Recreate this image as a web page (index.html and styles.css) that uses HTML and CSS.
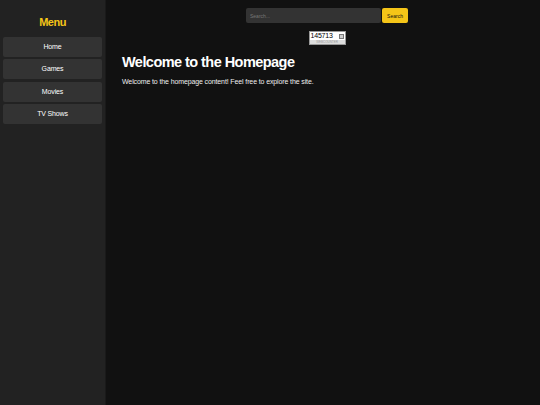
FILE: index.html
```html
<!DOCTYPE html>
<html>
<head>
<meta charset="utf-8">
<link rel="stylesheet" href="styles.css">
</head>
<body>
<div class="layout">
  <aside class="sidebar">
    <h2 class="menu-title">Menu</h2>
    <nav class="menu">
      <a class="menu-item">Home</a>
      <a class="menu-item">Games</a>
      <a class="menu-item">Movies</a>
      <a class="menu-item">TV Shows</a>
    </nav>
  </aside>
  <main class="main">
    <div class="topbar">
      <div class="search">
        <input class="search-input" placeholder="Search...">
        <button class="search-btn">Search</button>
      </div>
      <div class="counter">
        <div class="counter-top"><span class="counter-num">145713</span><span class="counter-arrow"></span></div>
        <div class="counter-bottom">WEBCOUNTER</div>
      </div>
    </div>
    <h1 class="title">Welcome to the Homepage</h1>
    <p class="text">Welcome to the homepage content! Feel free to explore the site.</p>
  </main>
</div>
</body>
</html>
```
FILE: styles.css
```css
html, body { margin: 0; padding: 0; height: 100%; }
body { font-family: "Liberation Sans", Arial, sans-serif; background: #111; color: #fff; }
.layout { display: flex; height: 405px; }
.sidebar { width: 106px; background: #222; border-right: 1px solid #1a1a1a; box-sizing: border-box; padding: 16px 3px 0; flex-shrink: 0; }
.menu-title { margin: 0 0 8px; text-align: center; color: #f5c518; font-size: 11px; letter-spacing: -0.5px; font-weight: bold; line-height: 13px; }
.menu { display: flex; flex-direction: column; gap: 2.3px; }
.menu-item { display: block; background: #333; border-radius: 2px; height: 20px; line-height: 20px; text-align: center; font-size: 7px; letter-spacing: -0.15px; color: #fff; }
.main { flex: 1; padding: 8px 16px 0; box-sizing: border-box; }
.topbar { display: flex; flex-direction: column; align-items: center; padding-left: 8px; }
.search { display: flex; }
.search-input { width: 135px; height: 15px; box-sizing: border-box; border: none; background: #333; border-radius: 2px; color: #fff; font-size: 5px; padding: 0 4px; font-family: inherit; outline: none; }
.search-input::placeholder { color: #777; }
.search-btn { width: 26px; height: 15px; margin-left: 1px; border: none; background: #f5c518; border-radius: 2px; font-size: 5px; color: #111; padding: 0; font-family: inherit; }
.counter { margin-top: 8px; width: 37px; background: #ddd; border: 1px solid #999; box-sizing: border-box; }
.counter-top { display: flex; align-items: center; justify-content: space-between; background: #fff; height: 8px; padding: 0 1px; }
.counter-num { font-size: 7px; color: #000; line-height: 8px; letter-spacing: -0.2px; }
.counter-arrow { width: 5px; height: 5px; background: #ccc; border: 1px solid #777; box-sizing: border-box; }
.counter-bottom { height: 4px; font-size: 3px; line-height: 4px; color: #999; text-align: center; }
.title { margin: 9px 0 0; font-size: 14.5px; letter-spacing: -0.55px; font-weight: bold; line-height: 17px; }
.text { margin: 6px 0 0; font-size: 7px; letter-spacing: -0.12px; line-height: 9px; color: #eee; }
```
